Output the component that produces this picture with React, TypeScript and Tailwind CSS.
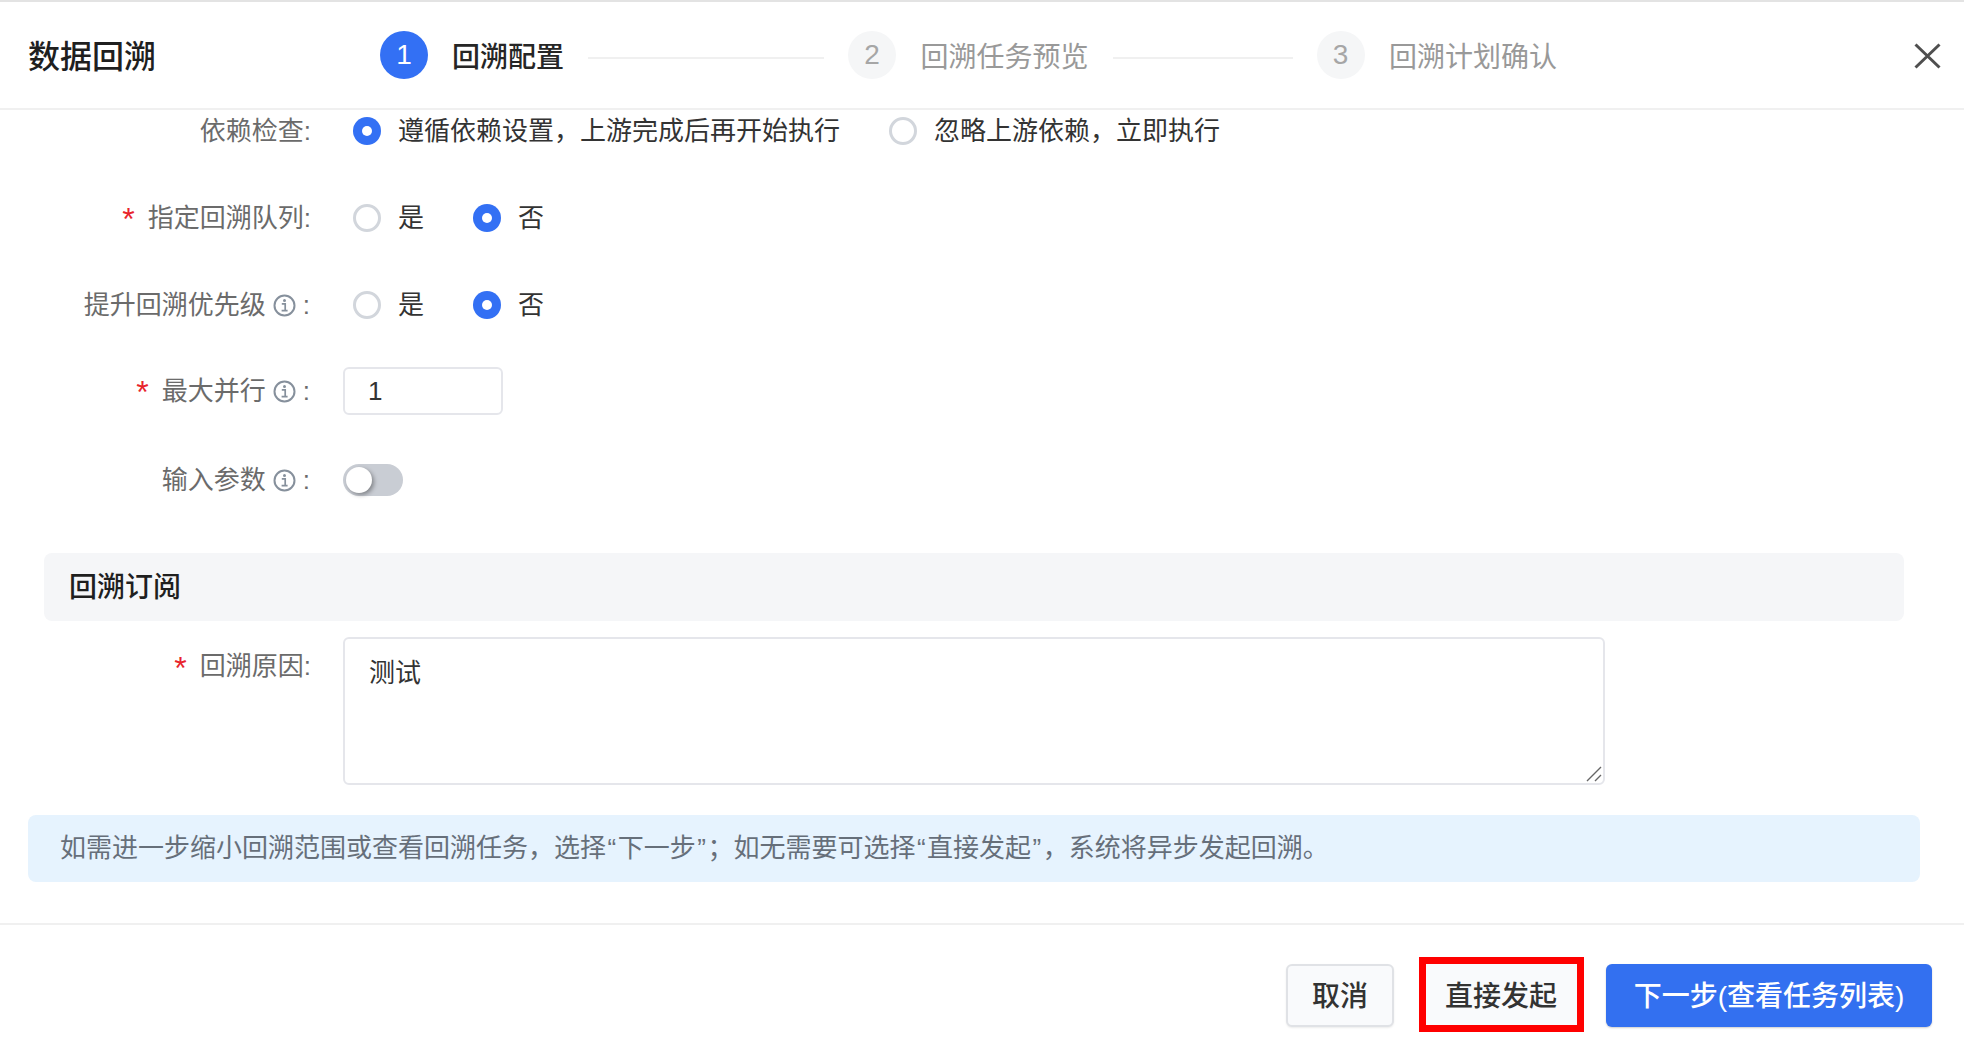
import * as React from 'react';

const FONT = "font-['Liberation_Sans','Noto_Sans_CJK_SC',sans-serif]";

const InfoIcon = () => (
  <svg width="23" height="23" viewBox="0 0 23 23" fill="none" className="shrink-0">
    <circle cx="11.5" cy="11.5" r="10" stroke="#86909c" strokeWidth="2" />
    <circle cx="11.5" cy="6.6" r="1.5" fill="#86909c" />
    <path d="M8.8 9.8h3.4v6.4M8.6 16.6h6" stroke="#86909c" strokeWidth="1.7" />
  </svg>
);

const Radio = ({ checked, label, className }: { checked?: boolean; label: string; className?: string }) => (
  <div className={`flex items-center ${className ?? ''}`}>
    {checked ? (
      <span className="flex h-[28px] w-[28px] items-center justify-center rounded-full bg-[#3370f4]">
        <span className="h-[10px] w-[10px] rounded-full bg-white" />
      </span>
    ) : (
      <span className="h-[28px] w-[28px] rounded-full border-[3px] border-[#d2d6dc] bg-white" />
    )}
    <span className="ml-[17px] text-[26px] text-[#333333]">{label}</span>
  </div>
);

const Step = ({ n, text, active }: { n: number; text: string; active?: boolean }) => (
  <div className="flex items-center">
    <span
      className={`flex h-[48px] w-[48px] items-center justify-center rounded-full text-[28px] ${
        active ? 'bg-[#3370f4] text-white' : 'bg-[#f5f6f7] text-[#a6a6a6]'
      }`}
    >
      {n}
    </span>
    <span className={`mt-[5px] text-[28px] ${active ? 'ml-[24px] font-medium text-[#262626]' : 'ml-[24.5px] text-[#999999]'}`}>
      {text}
    </span>
  </div>
);

const FormLabel = ({ text, required, info }: { text: string; required?: boolean; info?: boolean }) => (
  <div className="mr-[32px] flex w-[283px] shrink-0 items-center justify-end text-[26px] text-[#6b6b6b]">
    {required && <span className="mr-[13px] mt-[2px] text-[32px] leading-none text-[#e8242c]">*</span>}
    <span>{text}</span>
    {info ? (
      <>
        <span className="ml-[7px]"><InfoIcon /></span>
        <span className="ml-[7px] mr-[1px]">:</span>
      </>
    ) : (
      <span>:</span>
    )}
  </div>
);

const Quote = ({ children }: { children: string }) => <span className="mx-[1.5px]">{children}</span>;

export default function App() {
  return (
    <div className={`flex h-[1050px] w-[1964px] flex-col overflow-hidden border-t-2 border-[#e3e3e3] bg-white ${FONT}`}>
      <div className="flex h-[108px] shrink-0 items-center border-b-2 border-[#f0f0f0] pl-[28px] pr-[23px]">
        <div className="mt-[3px] w-[352px] text-[32px] font-medium text-[#1f1f1f]">数据回溯</div>
        <Step n={1} text="回溯配置" active />
        <div className="mx-[24px] mt-[6px] h-[2px] w-[236px] bg-[#f0f0f0]" />
        <Step n={2} text="回溯任务预览" />
        <div className="mx-[24px] mt-[6px] h-[2px] w-[180px] bg-[#f0f0f0]" />
        <Step n={3} text="回溯计划确认" />
        <button className="ml-auto mt-[2px]">
          <svg width="27" height="26" viewBox="0 0 27 26" fill="none" className="block">
            <path d="M1.5 1.5l24 23M25.5 1.5l-24 23" stroke="#4f4f4f" strokeWidth="3" />
          </svg>
        </button>
      </div>

      <div className="flex-1 overflow-hidden">
        <div className="-mt-[3px] pl-[28px]">
          <div className="mb-[39px] flex h-[48px] items-center">
            <FormLabel text="依赖检查" />
            <Radio checked label="遵循依赖设置，上游完成后再开始执行" className="ml-[10px]" />
            <Radio label="忽略上游依赖，立即执行" className="ml-[49px]" />
          </div>
          <div className="mb-[39px] flex h-[48px] items-center">
            <FormLabel text="指定回溯队列" required />
            <Radio label="是" className="ml-[10px]" />
            <Radio checked label="否" className="ml-[49px]" />
          </div>
          <div className="mb-[38px] flex h-[48px] items-center">
            <FormLabel text="提升回溯优先级" info />
            <Radio label="是" className="ml-[10px]" />
            <Radio checked label="否" className="ml-[49px]" />
          </div>
          <div className="mb-[41px] flex h-[48px] items-center">
            <FormLabel text="最大并行" required info />
            <input
              readOnly
              defaultValue="1"
              className="h-[48px] w-[160px] rounded-[6px] border-2 border-[#e5e6eb] pl-[23px] text-[26px] text-[#333333] outline-none"
            />
          </div>
          <div className="mb-[49px] flex h-[48px] items-center">
            <FormLabel text="输入参数" info />
            <span className="flex h-[32px] w-[60px] items-center rounded-full bg-[#c9cdd4] pl-[3px]">
              <span className="h-[26px] w-[26px] rounded-full bg-white shadow-[2px_2px_4px_rgba(0,0,0,0.35)]" />
            </span>
          </div>

          <div className="ml-[16px] flex h-[68px] w-[1860px] items-center rounded-[8px] bg-[#f5f6f8] pl-[25px] pt-[2px] text-[28px] font-medium text-[#1f1f1f]">
            回溯订阅
          </div>

          <div className="mt-[16px] flex items-start">
            <div className="mt-[10px]">
              <FormLabel text="回溯原因" required />
            </div>
            <div className="relative">
              <textarea
                readOnly
                defaultValue="测试"
                className="block h-[148px] w-[1262px] resize-none rounded-[6px] border-2 border-[#e5e6eb] px-[24px] py-[16px] text-[26px] leading-[36px] text-[#333333] outline-none"
              />
              <svg width="16" height="16" viewBox="0 0 16 16" fill="none" className="absolute bottom-[3px] right-[3px]">
                <path d="M1 15L15 1M9 15l6-6" stroke="#666666" strokeWidth="1.4" />
              </svg>
            </div>
          </div>

          <div className="mt-[30px] flex h-[67px] w-[1892px] items-center rounded-[8px] bg-[#e6f3fe] pl-[32px] text-[26px] text-[#666f7a]">
            <span>
              如需进一步缩小回溯范围或查看回溯任务，选择<Quote>“</Quote>下一步<Quote>”</Quote>；如无需要可选择<Quote>“</Quote>直接发起<Quote>”</Quote>，系统将异步发起回溯。
            </span>
          </div>
        </div>
      </div>

      <div className="flex h-[127px] shrink-0 items-start justify-end border-t-2 border-[#f0f0f0] pr-[32px] pt-[39px]">
        <button className="h-[63px] w-[108px] rounded-[6px] border-2 border-[#e0e2e6] bg-[#f9fafc] pt-[2px] text-[28px] font-medium text-[#333333] shadow-[0_1px_2px_rgba(0,0,0,0.08)]">
          取消
        </button>
        <div className="relative ml-[26px] mr-[24px]">
          <button className="h-[63px] w-[162px] rounded-[6px] bg-[#f9fafc] pt-[2px] text-[28px] font-medium text-[#333333]">
            直接发起
          </button>
          <div className="absolute -bottom-[5px] -left-[1px] -right-[2px] -top-[7px] border-[7px] border-[#ff0000]" />
        </div>
        <button className="h-[63px] w-[326px] rounded-[6px] bg-[#3370f0] pt-[2px] text-[28px] font-medium text-white shadow-[0_1px_2px_rgba(0,0,0,0.2)]">
          下一步(查看任务列表)
        </button>
      </div>
    </div>
  );
}
